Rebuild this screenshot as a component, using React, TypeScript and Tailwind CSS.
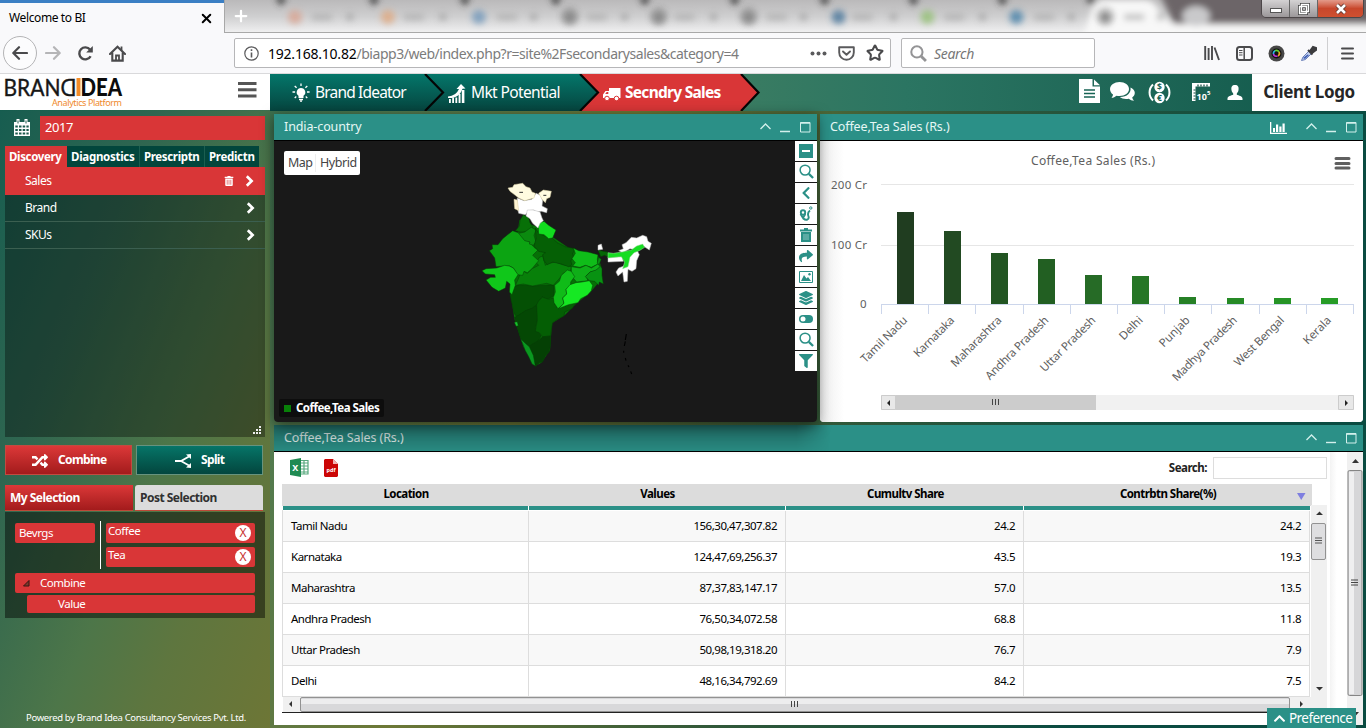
import React from "react";
import {
  FaFilter, FaRandom, FaChevronUp, FaChevronLeft,
  FaShare, FaTrashAlt, FaLayerGroup,
} from "react-icons/fa";
import { ArrowLeft, ArrowRight, Star, X, Plus } from "lucide-react";

const tabBlobs = [
  { x: 70, c: "#d9a08c", t: 95 }, { x: 163, c: "#e0a57a", t: 187 }, { x: 254, c: "#6b93b8", t: 280 },
  { x: 345, c: "#777777", t: 370 }, { x: 434, c: "#777777", t: 458 }, { x: 524, c: "#777777", t: 550 },
  { x: 614, c: "#3f6f95", t: 636 }, { x: 703, c: "#8fbf6d", t: 728 }, { x: 792, c: "#3d7ba5", t: 818 },
  { x: 881, c: "#6d6d6d", t: 908 },
];

function Magnifier({ size, className = "", sw = 1.6 }: { size: number; className?: string; sw?: number }) {
  return (
    <svg className={className} width={size} height={size} viewBox="0 0 16 16" fill="none" stroke="currentColor">
      <circle cx="6.500" cy="6.500" r="5.300" strokeWidth={sw} />
      <path d="M10.500 10.500L15 15" strokeWidth={sw + 0.8} />
    </svg>
  );
}

function BoldChevron({ className = "" }: { className?: string }) {
  return <svg className={className} width="9" height="12" viewBox="0 0 9 12" fill="none"><path d="M1.800 1.300L6.600 6L1.800 10.700" stroke="#fff" strokeWidth="2.700" /></svg>;
}

function BrowserTabs() {
  return (
    <div className="flex h-[33px] shrink-0">
      <div className="flex w-[224px] items-center justify-between border-t-[3px] border-[#3b7fc4] bg-[#f9f9fb] pr-[10px] pl-[9px]">
        <span className="text-[12px] tracking-[-0.38px] text-black">Welcome to BI</span>
        <X size={15} strokeWidth={3.2} className="text-black" />
      </div>
      <div className="relative flex-1 overflow-hidden border-b border-l border-[#a8a8a8] bg-[#cfcfcf]">
        <svg className="block h-[33px] w-full" viewBox="0 0 1142 33">
          <defs>
            <filter id="soft" x="-20%" y="-50%" width="140%" height="200%"><feGaussianBlur stdDeviation="3.2" /></filter>
            <linearGradient id="tabbg" x2="0" y2="1">
              <stop offset="0" stopColor="#bab9ba" /><stop offset=".5" stopColor="#cfcfd0" /><stop offset="1" stopColor="#f1f1f2" />
            </linearGradient>
          </defs>
          <rect width="1142" height="33" fill="url(#tabbg)" />
          <g filter="url(#soft)">
            <path d="M935 -8H1160V24H950Z" fill="#6c6567" />
            <path d="M858 40L868 8Q872 0 882 0H922Q932 2 934 10L946 24H1150V42Z" fill="#f8f8f8" />
            <ellipse cx="972" cy="16" rx="14" ry="10" fill="#c9c9cb" />
            {tabBlobs.map((b) => (
              <g key={b.x}>
                <circle cx={b.x} cy="17" r="7" fill={b.c} opacity=".75" />
                <rect x={b.t - 8} y="14" width="20" height="6" fill="#aaa" opacity=".7" />
                <circle cx={b.x + 55} cy="17" r="3.500" fill="#8a8a8a" opacity=".6" />
                <path d={`M${b.x - 20} -3h12l-6 9z`} fill="#3c3c3c" />
              </g>
            ))}
          </g>
          <g fill="none" stroke="#707070" strokeWidth="3" opacity=".35" filter="url(#soft)"><circle cx="881" cy="16" r="7" /><circle cx="345" cy="16" r="7" /><circle cx="434" cy="16" r="7" /><circle cx="524" cy="16" r="7" /></g>
        </svg>
        <Plus size={18} strokeWidth={3} className="absolute top-[7px] left-[7px] text-white" />
        <div className="absolute top-[-1px] right-[2px] flex h-[19px] w-[103px] overflow-hidden rounded-b-[5px] border border-[#4c4648] text-white">
          <div className="flex w-[28px] items-center justify-center border-r border-[#666] bg-linear-to-b from-[#d4d2d3] to-[#9b9799]">
            <i className="mt-1 h-[5px] w-[12px] border border-[#555] bg-white" />
          </div>
          <div className="flex w-[28px] items-center justify-center border-r border-[#666] bg-linear-to-b from-[#d4d2d3] to-[#9b9799]">
            <svg width="14" height="14" viewBox="0 0 14 14" fill="none"><path d="M4.500 2.500h7v7h-7zM2.500 4.500h7v7h-7z" stroke="#444" strokeWidth="3" /><path d="M4.500 2.500h7v7h-7zM2.500 4.500h7v7h-7z" stroke="#fff" strokeWidth="1.400" /></svg>
          </div>
          <div className="flex flex-1 items-center justify-center bg-linear-to-b from-[#e39a8a] via-[#c8472c] to-[#cf5030]">
            <svg width="14" height="12" viewBox="0 0 14 12"><path d="M3 2l8 8M11 2l-8 8" stroke="#5d3630" strokeWidth="4.400" /><path d="M3 2l8 8M11 2l-8 8" stroke="#fff" strokeWidth="2.600" /></svg>
          </div>
        </div>
      </div>
    </div>
  );
}

function BrowserToolbar() {
  return (
    <div className="flex h-[41px] shrink-0 items-center border-b border-[#d9d9db] bg-[#f9f9fb] text-[#4a4a4c]">
      <div className="flex w-[234px] items-center pl-[3px]">
        <div className="flex size-[34px] items-center justify-center rounded-full border border-[#b4b4b6] bg-[#fcfcfd]">
          <svg width="16" height="14" viewBox="0 0 16 14" fill="none" stroke="#4a4a4c" strokeWidth="2.200" strokeLinecap="round" strokeLinejoin="round"><path d="M15 7H1.500M7 1.200L1.300 7L7 12.800" /></svg>
        </div>
        <svg className="ml-[8px]" width="16" height="14" viewBox="0 0 16 14" fill="none" stroke="#b5b5b7" strokeWidth="2.200" strokeLinecap="round" strokeLinejoin="round"><path d="M1 7h13.500M9 1.200L14.700 7L9 12.800" /></svg>
        <svg className="ml-[16px]" width="17" height="17" viewBox="0 0 17 17" fill="none"><path d="M13.600 11.200A6 6 0 1 1 13 4.600" stroke="#4a4a4c" strokeWidth="2.400" /><path d="M15.800 1v6.600H9.200z" fill="#4a4a4c" /></svg>
        <svg className="ml-[15px]" width="17" height="17" viewBox="0 0 17 17"><path d="M1 9L8.500 1.800L16 9M3.300 8v7.600h10.400V8" fill="none" stroke="#4a4a4c" strokeWidth="2.100" strokeLinecap="round" /><path d="M7 15.500v-5h3v5M12.500 1.500v4" stroke="#4a4a4c" strokeWidth="1.800" fill="none" /></svg>
      </div>
      <div className="flex h-[30px] w-[657px] items-center rounded-[2px] border border-[#b6b6b8] bg-white pr-[7px] pl-[9px]">
        <svg width="15" height="15" viewBox="0 0 15 15" fill="none" stroke="#5a5a5c"><circle cx="7.500" cy="7.500" r="6.700" strokeWidth="1.200" /><path d="M7.500 6.500v5M7.500 3.300v1.700" strokeWidth="1.600" /></svg>
        <span className="ml-[9px] text-[14px] tracking-[-0.47px] text-[#7c7c7c]"><span className="tracking-[-0.22px] text-black">192.168.10.82</span>/biapp3/web/index.php?r=site%2Fsecondarysales&amp;category=4</span>
        <div className="ml-auto flex items-center gap-[11px]">
          <svg width="17" height="5" viewBox="0 0 17 5" fill="#5a5a5c"><circle cx="2.500" cy="2.500" r="2" /><circle cx="8.500" cy="2.500" r="2" /><circle cx="14.500" cy="2.500" r="2" /></svg>
          <svg width="17" height="15" viewBox="0 0 17 15" fill="none" stroke="#5a5a5c" strokeWidth="1.900" strokeLinecap="round" strokeLinejoin="round"><path d="M1.200 1.200h14.600v5.300a7.300 7.300 0 0 1-14.600 0z" /><path d="M5 5.500l3.500 3.300L12 5.500" /></svg>
          <Star size={18} strokeWidth={2.7} className="-mr-px" />
        </div>
      </div>
      <div className="ml-[10px] flex h-[30px] w-[194px] items-center rounded-[2px] border border-[#b6b6b8] bg-white pl-[8px]">
        <Magnifier size={17} sw={1.9} className="text-[#949496]" />
        <span className="ml-[7px] text-[14px] tracking-[-0.3px] text-[#777] italic">Search</span>
      </div>
      <div className="ml-auto flex items-center">
        <svg width="16" height="16" viewBox="0 0 16 16" stroke="#4a4a4c" strokeWidth="1.900" fill="none"><path d="M1.200 1v14M4.600 3v12M8 1v14M10.500 2.500L15 15" /></svg>
        <svg className="ml-[16px]" width="17" height="15" viewBox="0 0 17 15" fill="none" stroke="#4a4a4c"><rect x="1" y="1" width="15" height="13" rx="2.500" strokeWidth="2" /><path d="M8.200 1v13" strokeWidth="1.500" /><path d="M3 4.500h3.500M3 6.700h3.500M3 9h3.500" /></svg>
        <svg className="ml-[15px]" width="17" height="17" viewBox="0 0 17 17"><circle cx="8.500" cy="8.500" r="8" fill="#474747" /><circle cx="8.500" cy="8.500" r="5" fill="#111" /><g fill="none" strokeWidth="1.700"><path d="M5.400 9A3.200 3.200 0 0 1 7 5.800" stroke="#29b6e8" /><path d="M7 5.700A3.200 3.200 0 0 1 11 7" stroke="#63d531" /><path d="M11 7A3 3 0 0 1 10 11" stroke="#f0a42a" /><path d="M9.500 11A3 3 0 0 1 5.400 9" stroke="#bb35d6" /></g></svg>
        <svg className="ml-[15px]" width="17" height="17" viewBox="0 0 17 17"><path d="M1.500 15.500L3 12L9 6l2.500 2.500-6 6z" fill="#c4d1ef" stroke="#6a7fb8" /><path d="M3 13l4.500-3.500 1.500.5-4 4z" fill="#3f5fb5" /><path d="M8 5l4.500 4.500M10 6l3-4 3 1 0 2-4 3z" stroke="#3c3c3e" strokeWidth="2" fill="#3c3c3e" /></svg>
        <i className="ml-[10px] h-[33px] w-px bg-[#cfcfd1]" />
        <svg className="mr-[12px] ml-[13px]" width="13" height="13" viewBox="0 0 13 13" stroke="#4a4a4c" strokeWidth="2" strokeLinecap="round"><path d="M1 1.500h11M1 6.500h11M1 11.500h11" /></svg>
      </div>
    </div>
  );
}

function Logo() {
  return (
    <div className="flex h-[36px] w-[270px] items-start bg-white">
      <svg width="130" height="36" viewBox="0 0 130 36" className="overflow-visible font-['Lato',sans-serif]">
        <text x="3.500" y="21.500" fontSize="24" fill="#171717" stroke="#171717" strokeWidth=".4" textLength="57" lengthAdjust="spacingAndGlyphs">BRAN</text>
        <text transform="translate(76.500 21.500) scale(-1 1)" x="0" y="0" fontSize="24" fill="#171717" stroke="#171717" strokeWidth=".4" textLength="16" lengthAdjust="spacingAndGlyphs">D</text>
        <rect x="76.500" y="4" width="4" height="18" fill="#f28c28" />
        <text x="80.500" y="21.500" fontSize="24" fontWeight="900" fill="#0b0b0b" textLength="41.500" lengthAdjust="spacingAndGlyphs">DEA</text>
        <text x="52" y="32" fontSize="9" fill="#ef8a2c" textLength="70" className="font-['Noto_Sans',sans-serif]">Analytics Platform</text>
      </svg>
      <svg className="mt-[8px] ml-[108px]" width="19" height="16" viewBox="0 0 19 16" fill="#555"><path d="M0 0h18.500v3H0zM0 6.300h18.500v3H0zM0 12.600h18.500v3H0z" /></svg>
    </div>
  );
}

function BulbIcon() {
  return (
    <svg width="18" height="19" viewBox="0 0 18 19" fill="#fff" stroke="#fff"><path d="M9 5a4.300 4.300 0 0 0-2.500 7.800v2.200h5v-2.200A4.300 4.300 0 0 0 9 5z" stroke="none" /><path d="M7 16.500h4M8 18.200h2M9 .5v2.500M2.700 3l1.900 1.800M15.300 3l-1.900 1.800M.5 9h2.600M15 9h2.600M2.700 15l1.600-1.500M15.300 15l-1.600-1.500" strokeWidth="1.300" /></svg>
  );
}

function TopBar() {
  return (
    <div className="flex h-[37px] shrink-0">
      <Logo />
      <div className="flex flex-1 bg-linear-to-r from-[#5d8f60] from-0% via-[#2b7562] via-[58%] to-[#0f574a]">
        <div className="relative flex w-[490px] text-[15.5px] text-white">
          <svg className="absolute inset-0" width="490" height="37" viewBox="0 0 490 37">
            <defs><linearGradient id="nav" x2="0" y2="1"><stop stopColor="#04766a" /><stop offset="1" stopColor="#06453f" /></linearGradient></defs>
            <path d="M0 0H310L328 18.500L310 37H0z" fill="url(#nav)" />
            <path d="M310 0H471L489 18.500L471 37H310L328 18.500z" fill="#d93637" />
            <path d="M155 0l18 18.500L155 37M310 0l18 18.500L310 37M471 0l17.500 18.500L471 37" fill="none" stroke="#050505" strokeWidth="2.200" />
          </svg>
          <div className="relative flex w-[155px] items-center pl-[22px]"><BulbIcon /><span className="ml-[5px] tracking-[-0.82px]">Brand Ideator</span></div>
          <div className="relative flex w-[155px] items-center pl-[23px]">
            <svg className="mt-[2px]" width="18" height="19" viewBox="0 0 18 19" fill="#fff"><path d="M1 15h1.800v4H1zM4.200 13.500H6V19H4.200zM7.400 13.500h1.800V19H7.400zM10.600 10h1.900v9h-1.900zM13.800 6h2.600v13h-2.600z" /><path d="M0 12.500Q8 12 11 5L8.500 5L13 0l4.500 4.500-3 .2C12 11.500 7.500 14.500 0 14z" /></svg>
            <span className="ml-[5px] tracking-[-0.62px]">Mkt Potential</span>
          </div>
          <div className="relative flex flex-1 items-center pl-[23px]">
            <svg className="mt-[3px]" width="18" height="13" viewBox="0 0 18 13"><path d="M6 0h11.500v10H0V6.500L2.500 3H6z" fill="#fff" /><path d="M2.200 6l1.500-2h1.600v2z" fill="#d93637" /><circle cx="4" cy="10.500" r="2.300" fill="#fff" stroke="#d93637" /><circle cx="13.500" cy="10.500" r="2.300" fill="#fff" stroke="#d93637" /></svg>
            <span className="ml-[4px] font-bold tracking-[-0.72px]">Secndry Sales</span></div>
        </div>
        <div className="ml-auto flex items-center text-white">
          <svg className="-mt-[3px]" width="21" height="24" viewBox="0 0 21 24"><path d="M0 0h13.500v7.500H21V24H0z" fill="#fff" /><path d="M15 .5L21 6.200h-6z" fill="#fff" /><path d="M5 11h11M5 14.500h11M5 18h11" stroke="#176354" strokeWidth="1.500" /></svg>
          <svg className="-mt-[2px] ml-[10px]" width="25" height="20" viewBox="0 0 25 20" fill="#fff"><path d="M9.500 0C15 0 19 3 19 7s-4 7-9.500 7c-1 0-2-.1-3-.3C5 15 3.500 15.700 1.500 15.800c.8-1 1.400-2 1.500-3.300C1 11.200 0 9.200 0 7c0-4 4.500-7 9.500-7z" /><path d="M20.500 5.500c2.500 1 4.300 3 4.300 5.300 0 2-1 3.500-2.600 4.600.2 1.200.9 2.300 1.800 3.300-2 0-3.800-.8-5.200-2-3.600.7-7 0-9-1.700 7 .2 11.600-4 10.700-9.500z" /></svg>
          <svg className="ml-[13px] font-['Noto_Sans',sans-serif]" width="23" height="23" viewBox="0 0 23 23"><path d="M5 3.500A11 11 0 0 0 5 19.500M18 3.500a11 11 0 0 1 0 16" fill="none" stroke="#fff" strokeWidth="2" /><circle cx="11.500" cy="6" r="5.200" fill="#fff" /><circle cx="11.500" cy="17" r="5.200" fill="#fff" /><text x="11.500" y="9" fontSize="8.500" fontWeight="700" textAnchor="middle" fill="#176354">$</text><text x="11.500" y="20" fontSize="8.500" fontWeight="700" textAnchor="middle" fill="#176354">€</text></svg>
          <svg className="ml-[21px] font-['Noto_Sans',sans-serif]" width="19" height="19" viewBox="0 0 19 19"><path d="M0 0h18v3.500H3.500V18H0z" fill="#fff" /><path d="M6 1.500v2M9 1.500v2M12 1.500v2M15 1.500v2M1.500 7h2M1.500 10h2M1.500 13h2M1.500 16h2" stroke="#124c42" strokeWidth="1.200" /><text x="4.500" y="16.500" fontSize="9" fontWeight="700" fill="#fff">10</text><text x="15" y="12" fontSize="6" fontWeight="700" fill="#fff">5</text></svg>
          <svg className="-mt-[1px] mr-[9px] ml-[16px]" width="16" height="15" viewBox="0 0 16 15" fill="#fff"><path d="M8 0c3 0 4 2 3.500 5-.2 1.700-1 2.700-1.700 3.500v1.300c2 .8 5.700 1.300 5.700 3.700V15H.5v-1.500c0-2.400 3.700-2.900 5.700-3.700V8.500C5.500 7.700 4.700 6.700 4.500 5 4 2 5 0 8 0z" /></svg>
          <div className="h-[37px] w-[114px] bg-white pt-[5px] text-center text-[17px] font-bold tracking-[-0.35px] whitespace-nowrap text-[#262626]">Client Logo</div>
        </div>
      </div>
    </div>
  );
}

function Sidebar() {
  return (
    <aside className="flex w-[270px] shrink-0 flex-col bg-[linear-gradient(113deg,#175d50_0%,#2f6650_30%,#4d7649_58%,#5e763f_75%,#6d7636_100%)] pl-[5px] text-white">
      <div className="mt-[5px] flex h-[24px] w-[260px]">
        <div className="flex w-[35px] items-center pl-[9px]">
          <svg className="-mt-px" width="16" height="17" viewBox="0 0 16 17"><path d="M0 3h16v14H0z" fill="#fff" /><path d="M1.300 6.500h2.500v2H1.300zM5 6.500h2.500v2H5zM8.700 6.500h2.500v2H8.700zM12.400 6.500h2.300v2h-2.300zM1.300 10h2.500v2H1.300zM5 10h2.500v2H5zM8.700 10h2.500v2H8.700zM12.400 10h2.300v2h-2.300zM1.300 13.500h2.500v2H1.300zM5 13.500h2.500v2H5zM8.700 13.500h2.500v2H8.700zM12.400 13.500h2.300v2h-2.300z" fill="#1c5a4d" /><path d="M4 0v5M12 0v5" stroke="#fff" strokeWidth="3" /><path d="M4 1.500v3M12 1.500v3" stroke="#1c5a4d" /></svg>
        </div>
        <div className="flex flex-1 items-center bg-[#d93637] pl-[5px] text-[13px] tracking-[-0.4px]">2017</div>
      </div>
      <div className="mt-[6px] flex h-[21px] items-stretch text-[11.5px] font-bold whitespace-nowrap">
        <div className="flex w-[62px] items-center pl-[4px] bg-[#d93637] tracking-[-0.35px]">Discovery</div>
        <div className="flex w-[73px] items-center border-r border-[#1b5e50] bg-[#02463c] pl-[4px] tracking-[-0.28px]">Diagnostics</div>
        <div className="flex w-[65px] items-center border-r border-[#1b5e50] bg-[#02463c] pl-[4px] tracking-[-0.35px]">Prescriptn</div>
        <div className="flex w-[54px] items-center bg-[#02463c] pl-[4px] tracking-[-0.3px]">Predictn</div>
      </div>
      <div className="relative flex h-[270px] w-[260px] flex-col bg-black/35 text-[12px] tracking-[-0.5px]">
        <div className="flex h-[28px] items-center bg-[#d93637] pl-[20px]">Sales<FaTrashAlt size={10} className="ml-auto" /><BoldChevron className="mr-[11px] ml-[11px]" /></div>
        <div className="flex h-[27px] items-center border-b border-[#3b5f50] pl-[20px]">Brand<BoldChevron className="mr-[10px] ml-auto" /></div>
        <div className="flex h-[27px] items-center border-b border-[#3b5f50] pl-[20px]">SKUs<BoldChevron className="mr-[10px] ml-auto" /></div>
        <svg className="absolute right-[3px] bottom-[2px]" width="9" height="9" viewBox="0 0 9 9" fill="#eee"><path d="M6 0h2v2H6zM6 3h2v2H6zM3 3h2v2H3zM0 6h2v2H0zM3 6h2v2H3zM6 6h2v2H6z" /></svg>
      </div>
      <div className="mt-[8px] flex gap-[4px] text-[12px] font-bold tracking-[-0.65px]">
        <div className="flex h-[30px] w-[127px] items-center border border-[#c24b40] bg-linear-to-b from-[#dc3838] to-[#a31b1c] pl-[26px]"><FaRandom size={16} className="mt-[2px]" /><span className="ml-[10px]">Combine</span></div>
        <div className="flex h-[30px] w-[127px] items-center border border-[#67937e] bg-linear-to-b from-[#067568] to-[#03463e] pl-[38px]">
          <svg className="mt-[2px]" width="17" height="14" viewBox="0 0 17 14"><path d="M0 7h6L14 2.500M6 7l8 4.500" stroke="#fff" strokeWidth="1.800" fill="none" /><path d="M11 .5L16 0v5zM11 13.500l5 .5V9z" fill="#fff" /></svg>
          <span className="ml-[9px]">Split</span>
        </div>
      </div>
      <div className="mt-[10px] flex h-[26px] gap-[2px] text-[12px] font-bold tracking-[-0.52px]">
        <div className="flex w-[128px] items-center border-b border-[#bd4a38] bg-linear-to-b from-[#dc3838] to-[#a31b1c] pl-[5px]">My Selection</div>
        <div className="flex w-[128px] items-center rounded-t-[3px] border-b border-[#bd4a38] bg-[#dcdcdc] pl-[5px] text-[#303030]">Post Selection</div>
      </div>
      <div className="mt-px h-[106px] w-[260px] bg-black/45 pt-[9px] pr-[10px] pl-[10px] text-[11.5px] tracking-[-0.46px]">
        <div className="flex">
          <div className="mt-[2px] flex h-[20px] w-[80px] items-center rounded-[2px] bg-[#d93637] pl-[4px]">Bevrgs</div>
          <div className="ml-[5px] h-[48px] w-px bg-white" />
          <div className="mt-[2px] ml-[5px] flex flex-1 flex-col gap-[4px]">
            {["Coffee", "Tea"].map((t) => (
              <div key={t} className="flex h-[20px] justify-between rounded-[2px] bg-[#d93637] pr-[4px] pl-[2px] leading-[16px]">{t}
                <span className="mt-[2px] flex size-[16px] items-center justify-center rounded-full bg-white text-[12px] tracking-normal text-[#c8302f]">X</span></div>
            ))}
          </div>
        </div>
        <div className="mt-[4px] flex h-[20px] items-center rounded-[2px] bg-[#d93637] pl-[8px]">
          <svg className="mt-px" width="7" height="7" viewBox="0 0 7 7"><path d="M6 .5V6H.5z" fill="#7b3a2c" stroke="#3a1512" /></svg>
          <span className="ml-[10px]">Combine</span></div>
        <div className="mt-[2px] ml-[12px] flex h-[18px] items-center rounded-[2px] bg-[#d93637] pl-[31px] leading-[16px]">Value</div>
      </div>
      <div className="mt-auto mb-[3px] pl-[21px] text-[9.5px] tracking-[-0.34px] whitespace-nowrap">Powered by Brand Idea Consultancy Services Pvt. Ltd.</div>
    </aside>
  );
}

function WindowButtons() {
  return (
    <svg width="51" height="12" viewBox="0 0 51 12" fill="none" stroke="#d3f0ec"><path d="M0.500 8L5.500 3L10.500 8" strokeWidth="1.300" /><path d="M20 10.500h10" strokeWidth="1.400" /><path d="M40.500 1.500h9.500v9.500h-9.500z" /><path d="M40.500 2h9.500" strokeWidth="1.600" /></svg>
  );
}

function PanelHeader({ title, chart }: { title: string; chart?: boolean }) {
  return (
    <div className="flex h-[27px] shrink-0 items-center border-b border-black bg-[#2b9087] pr-[6px] pl-[10px] text-[12.5px] tracking-[-0.11px] text-[#e6f7f5]">
      {title}
      <div className="ml-auto flex items-center">
        {chart && <svg className="mt-[2px] mr-[19px]" width="17" height="12" viewBox="0 0 17 12" fill="#fff"><path d="M0 0h1.300v10.700H17V12H0zM3 6h2v4H3zM6 2.500h2.200V10H6zM9.300 4.500h2.200V10H9.300zM12.500 1.500h2.200V10h-2.200z" /></svg>}
        <WindowButtons />
      </div>
    </div>
  );
}

function IndiaMap() {
  return (
    <svg className="absolute top-[29px] left-[196px]" width="200" height="210" viewBox="0 0 600 630" strokeWidth="1.500" strokeLinejoin="round">
      <path d="M148 150L200 170L256 206L300 236L384 256L396 300L384 340L360 368L320 400L285 435L246 460L240 540L214 578L196 588L160 530L134 450L122 376L134 340L130 290Z" fill="#067006" />
      <g stroke="#073d07">
        <path d="M120 375L128 352L148 344L188 348L252 344L252 378L232 388L216 380L204 400L188 414L166 424L140 440L132 430L126 402Z" fill="#045004" />
        <path d="M134 442L148 434L166 422L188 414L200 404L204 430L202 452L196 474L206 486L214 498L202 516L186 524L176 530L152 506L142 474Z" fill="#044804" />
        <path d="M200 404L206 392L218 382L236 388L250 384L254 402L264 416L296 404L320 396L306 416L284 426L282 438L262 448L248 458L244 480L242 498L218 500L208 488L196 484L202 452Z" fill="#045e04" />
        <path d="M178 528L204 512L218 500L242 498L242 520L238 546L226 558L218 576L208 578L196 590L188 558Z" fill="#044004" />
        <path d="M152 506L166 520L178 530L190 556L196 588L186 582L176 560L166 542Z" fill="#0a9720" />
        <path d="M133 457l9-2 3 12-7 2z" fill="#17c42c" />
        <path d="M146 324L150 312L162 304L172 310L186 296L206 286L198 278L208 262L218 258L226 286L236 280L256 276L278 284L304 290L302 304L280 310L268 326L250 346L230 340L188 348L160 342L136 346Z" fill="#08800a" />
        <path d="M128 182L150 190L166 208L180 216L192 232L204 240L188 256L206 272L186 296L172 308L162 304L158 316L142 314L130 294L118 288L102 288L78 290L74 264L58 242L68 236L66 224L84 224L98 206Z" fill="#0ca412" />
        <path d="M36 302L48 296L80 294L104 286L118 288L130 294L144 314L134 330L136 346L126 374L118 366L120 342L110 334L106 354L86 364L66 352L48 330L62 322L76 322L74 314L46 312Z" fill="#10c71a" />
        <path d="M160 134L176 142L180 158L188 170L180 182L164 186L150 186L136 182L148 168L150 150Z" fill="#077007" />
        <path d="M146 190L164 186L184 172L198 180L192 196L198 216L190 226L178 222L180 216L164 212Z" fill="#0b8a0f" />
        <path d="M196 174L206 190L224 198L248 206L262 218L286 230L316 236L308 250L312 264L302 272L306 284L296 290L274 282L248 276L232 284L222 272L218 254L226 248L206 244L192 228L198 206Z" fill="#056005" />
        <path d="M204 160L222 154L236 166L258 180L248 204L236 206L222 194L206 192Z" fill="#12dc1f" />
        <path d="M310 234L326 242L354 246L384 254L382 268L384 282L364 292L346 286L330 292L308 288L316 278L306 266L316 250Z" fill="#0fbd19" />
        <path d="M304 290L330 294L348 286L364 294L384 282L394 290L378 302L360 306L348 318L354 332L320 336L304 318Z" fill="#0fae18" />
        <path d="M386 262L394 268L388 282L396 296L396 316L400 342L388 336L386 346L374 334L358 332L346 320L360 306L378 300L390 290L382 278Z" fill="#089212" />
        <path d="M274 316L292 300L304 304L314 320L302 336L302 350L288 358L290 372L278 384L282 400L264 416L252 398L250 382L256 366L254 346L268 334Z" fill="#10bb18" />
        <path d="M300 344L318 338L336 336L358 332L368 346L364 362L352 376L332 386L324 398L296 404L280 410L266 416L282 400L278 384L290 372L288 358Z" fill="#16e823" />
        <path d="M384 240L400 244L414 246L414 262L404 256L392 260Z" fill="#056605" />
      </g>
      <g fill="#fff" stroke="#bbb">
        <path d="M142 84L162 92L186 88L198 70L212 76L218 92L216 108L232 116L230 128L214 124L202 126L190 120L176 122L166 134L146 130L140 104Z" />
        <path d="M172 120L190 120L210 126L216 144L220 152L210 160L204 174L188 160L180 146L168 138Z" />
        <path d="M384 226L394 222L398 238L384 240Z" />
        <path d="M456 224L468 218L484 202L500 204L518 196L530 200L534 214L544 220L538 240L520 228L502 240L480 236L458 248L446 242L460 236Z" />
        <path d="M414 262L456 260L460 274L414 276Z" />
        <path d="M476 254L502 242L508 254L500 272L498 296L486 304L474 298L472 334L462 336L458 306L444 318L438 306L446 294L462 288Z" />
      </g>
      <path d="M414 248L430 250L456 246L484 240L500 228L518 222L524 232L508 242L492 248L480 262L474 290L458 296L464 276L454 260L414 264Z" fill="#16dd22" stroke="#9fd89f" />
      <path d="M114 54L128 52L132 44L158 40L168 50L180 54L186 66L196 70L192 84L178 88L164 92L146 84L136 76L120 64Z" fill="#fffbe0" stroke="#d8cfa0" />
      <path d="M206 70L220 60L244 64L240 82L230 86L226 98L216 88Z" fill="#fffbe0" stroke="#d8cfa0" />
      <path d="M132 88L142 90L146 122L134 116Z" fill="#fff3d2" stroke="#d8cfa0" />
      <path d="M148 67h11M220 76h9" stroke="#333" strokeWidth="3" />
      <path d="M469 492l-3 18M466 514l-3 14M461 542v6M466 564l2 8M474 586l3 5M482 604l3 8" stroke="#000" strokeWidth="3.500" />
    </svg>
  );
}

const tools = [
  <svg width="14" height="14" viewBox="0 0 14 14"><path d="M0 0h14v14H0z" fill="#2b9087" /><path d="M3 7h8" stroke="#fff" strokeWidth="2" /></svg>,
  <Magnifier size={15} />,
  <FaChevronLeft size={14} />,
  <svg width="14" height="15" viewBox="0 0 14 15" fill="none" stroke="#2b9087" strokeWidth="1.900"><circle cx="4" cy="6.500" r="2.200" /><path d="M1.500 8L4 12l2.300-4M4.500 12.500c2.500 2.500 6 1 5-2-1-2.500-.5-4.500 1.500-6" /><circle cx="11.800" cy="2" r="1.200" strokeWidth="1" /></svg>,
  <svg width="12" height="14" viewBox="0 0 12 14"><path d="M0 2.500h12M4 1h4" stroke="#2b9087" strokeWidth="1.800" /><path d="M1 4h10v10H1z" fill="#2b9087" /><path d="M4 6v6M6 6v6M8 6v6" stroke="#8cc6c1" /></svg>,
  <FaShare size={14} />,
  <svg width="14" height="12" viewBox="0 0 14 12"><path d="M.5.5h13v11H.5z" fill="none" stroke="#2b9087" /><path d="M2 10l3-6 2.500 3.500L9 6l3 4z" fill="#2b9087" /><circle cx="10.500" cy="3.200" r="1.200" fill="#2b9087" /></svg>,
  <FaLayerGroup size={14} />,
  <svg width="14" height="8" viewBox="0 0 14 8"><rect width="14" height="8" rx="4" fill="#2b9087" /><circle cx="4" cy="4" r="2.500" fill="#fff" /></svg>,
  <Magnifier size={15} />,
  <FaFilter size={14} />,
];

function MapPanel() {
  return (
    <section className="relative z-10 flex h-[308px] w-[543px] flex-col overflow-hidden rounded-b-[4px] shadow-[0_3px_14px_rgba(0,0,0,0.55)]">
      <PanelHeader title="India-country" />
      <div className="relative flex-1 bg-[#191919]">
        <IndiaMap />
        <div className="absolute top-[10px] left-[10px] flex h-[24px] w-[76px] items-center rounded-[2px] bg-white text-[12.5px] tracking-[-0.5px] text-[#444]"><span className="w-[32px] border-r border-[#eee] pl-[4px]">Map</span><span className="pl-[4px] tracking-[-0.42px]">Hybrid</span></div>
        <div className="absolute top-0 right-0 flex flex-col gap-px text-[#2b9087]">
          {tools.map((t, i) => <div key={i} className="flex h-[20px] w-[22px] items-center justify-center bg-white pb-px">{t}</div>)}
        </div>
        <div className="absolute bottom-[5px] left-[5px] flex h-[18px] items-center rounded-[2px] bg-[#0d0d0d] px-[5px] text-[11.5px] font-bold tracking-[-0.52px] text-white"><i className="mr-[5px] size-[7px] bg-[#088008]" />Coffee,Tea Sales</div>
      </div>
    </section>
  );
}

const bars = [
  { n: "Tamil Nadu", y: 212, c: "#203d20", w: 60 }, { n: "Karnataka", y: 231, c: "#224a22", w: 52 },
  { n: "Maharashtra", y: 253, c: "#225522", w: 66 }, { n: "Andhra Pradesh", y: 259, c: "#225f22", w: 84 },
  { n: "Uttar Pradesh", y: 275, c: "#266b26", w: 73 }, { n: "Delhi", y: 276, c: "#267626", w: 28 },
  { n: "Punjab", y: 297, c: "#268026", w: 38 }, { n: "Madhya Pradesh", y: 298, c: "#268a26", w: 86 },
  { n: "West Bengal", y: 298, c: "#269426", w: 65 }, { n: "Kerala", y: 298, c: "#269c26", w: 34 },
];

function ChartPanel() {
  return (
    <section className="flex h-[308px] w-[543px] flex-col overflow-hidden rounded-b-[4px] bg-white">
      <PanelHeader title="Coffee,Tea Sales (Rs.)" chart />
      <svg className="bg-[linear-gradient(to_right,#ededed,#fff_24px)] font-['Noto_Sans',sans-serif]" width="543" height="281" viewBox="820 141 543 281" fill="#606060" fontSize="11.500">
        <text x="1031" y="165" textLength="124" fontSize="12">Coffee,Tea Sales (Rs.)</text>
        <path d="M1336 158.500h13M1336 163.500h13M1336 168h13" stroke="#606060" strokeWidth="3" strokeLinecap="round" />
        <path d="M881 184.500h473M881 245.500h473" stroke="#e6e6e6" />
        <text x="831" y="189" textLength="36">200 Cr</text><text x="831" y="249" textLength="36">100 Cr</text><text x="860" y="308">0</text>
        {bars.map((b, i) => (
          <g key={b.n}>
            <rect x={897 + Math.floor(i * 47.15)} y={b.y} width="17" height={304 - b.y} fill={b.c} />
            <text transform={`translate(${908 + i * 47.1} 321) rotate(-45)`} textAnchor="end" textLength={b.w}>{b.n}</text>
          </g>
        ))}
        <path d="M881 304.500h473M881.500 304v10M928.500 304v10M975.500 304v10M1023.500 304v10M1070.500 304v10M1117.500 304v10M1164.500 304v10M1211.500 304v10M1259.500 304v10M1306.500 304v10M1353.500 304v10" stroke="#ccd6eb" fill="none" />
        <path d="M881 395h473v15H881z" fill="#f1f1f1" /><path d="M895 395h201v15H895z" fill="#ccc" />
        <path d="M881.500 395.500h14v14h-14zM1338.500 395.500h15v14h-15z" fill="#e8e8e8" stroke="#ccc" />
        <path d="M890 400v6l-3-3zM1345 400v6l3-3z" fill="#222" /><path d="M992.500 399v6M995.500 399v6M998.500 399v6" stroke="#444" />
      </svg>
    </section>
  );
}

const rows = [
  ["Tamil Nadu", "156,30,47,307.82", "24.2", "24.2"], ["Karnataka", "124,47,69,256.37", "43.5", "19.3"],
  ["Maharashtra", "87,37,83,147.17", "57.0", "13.5"], ["Andhra Pradesh", "76,50,34,072.58", "68.8", "11.8"],
  ["Uttar Pradesh", "50,98,19,318.20", "76.7", "7.9"], ["Delhi", "48,16,34,792.69", "84.2", "7.5"],
];

function TablePanel() {
  return (
    <section className="relative flex h-[300px] w-[1089px] flex-col bg-white">
      <PanelHeader title="Coffee,Tea Sales (Rs.)" />
      <div className="flex min-h-0 flex-1">
        <div className="w-[1056px] pl-[8px]">
          <div className="flex h-[31px] items-center pl-[8px]">
            <svg width="19" height="19" viewBox="0 0 19 19" className="font-['Noto_Sans',sans-serif]"><path d="M0 2l11-2v19L0 17z" fill="#1f8a52" /><path d="M11 2.500h7v13.500h-7M11 5h7M11 8h7M11 11h7M11 14h7M14 2.500v13.500" fill="none" stroke="#58a97e" strokeWidth="1.200" /><text x="2.300" y="13" fontSize="9" fontWeight="700" fill="#fff">X</text></svg>
            <svg className="ml-[15px] font-['Noto_Sans',sans-serif]" width="14" height="18" viewBox="0 0 14 18"><path d="M1 0h8l5 5v12l-1 1H1l-1-1V1z" fill="#cb0606" /><path d="M9 0l5 5H9z" fill="#f0b2b2" /><text x="2.500" y="13" fontSize="5.500" fontWeight="700" fill="#fff">pdf</text></svg>
            <span className="ml-auto text-[11.5px] font-bold tracking-[-0.5px] text-[#222]">Search:</span>
            <div className="mr-[3px] ml-[6px] h-[22px] w-[114px] border border-[#ddd] bg-white" />
          </div>
          <div className="flex">
            <div className="w-[1030px]">
              <div className="mt-px flex h-[22px] items-center bg-[#dcdcdc] pb-[2px] text-center text-[11.5px] font-bold tracking-[-0.55px] text-black">
                <span className="w-[247px] pl-px">Location</span><span className="w-[257px]">Values</span><span className="w-[238px] pl-px">Cumultv Share</span>
                <span className="relative w-[288px]">Contrbtn Share(%)<svg className="absolute top-[8px] right-[6px]" width="9" height="7" viewBox="0 0 9 7"><path d="M0 0h8.500L4.250 7z" fill="#7f7fe0" /></svg></span>
              </div>
              <div className="flex h-[4px] w-[1028px] gap-px pl-px *:bg-[#2b9087]"><i className="w-[245px]" /><i className="w-[256px]" /><i className="w-[237px]" /><i className="flex-1" /></div>
              <div className="w-[1028px] border-l border-[#ddd] pt-px text-[11.5px] tracking-[-0.48px] text-black">
                {rows.map((r, i) => (
                  <div key={r[0]} className={`flex h-[31px] border-b border-[#ddd] *:flex *:items-center *:border-r *:border-[#ddd] *:px-[8px] ${i % 2 ? "bg-white" : "bg-[#f8f8f8]"}`}>
                    <span className="w-[246px]">{r[0]}</span><span className="w-[257px] justify-end">{r[1]}</span><span className="w-[238px] justify-end">{r[2]}</span><span className="flex-1 justify-end">{r[3]}</span>
                  </div>
                ))}
              </div>
            </div>
            <svg className="-ml-px mt-[22px]" width="16" height="192" viewBox="0 0 16 192"><path d="M0 0h16v192H0z" fill="#f0f0f0" /><path d="M5 10h7L8.500 6.500zM5 182h7l-3.500 3.500z" fill="#333" /><rect x=".5" y="18.500" width="14" height="36" rx="1.500" fill="#dedee0" stroke="#929292" /><path d="M4 33h7M4 35.500h7M4 38h7" stroke="#555" /></svg>
          </div>
          <svg width="1045" height="16" viewBox="0 0 1045 16"><path d="M1 0h1045v15H1z" fill="#f0f0f0" /><path d="M10 4v6L7 7zM1018 4v6l3-3z" fill="#333" /><rect x="18.500" y=".5" width="989" height="14" rx="1.500" fill="#d8d8da" stroke="#929292" /><path d="M19 2h988v5H19z" fill="#ededee" /><path d="M509.500 4v6M512.500 4v6M515.500 4v6" stroke="#444" /><path d="M0 15.500h1028" stroke="#222" /></svg>
        </div>
        <div className="w-[17px] bg-linear-to-r from-[#f3f3f3] to-white to-40%" />
        <svg width="16" height="273" viewBox="0 0 16 273" preserveAspectRatio="none"><path d="M0 0h16v273H0z" fill="#f0f0f0" /><path d="M5 11h7L8.500 7zM5 260h7l-3.500 4z" fill="#333" /><rect x="1" y="18.500" width="14" height="225" rx="1.500" fill="#d6d6d8" stroke="#858585" /><path d="M2 20h5v222H2z" fill="#efeff0" /><path d="M4 128h7M4 130.500h7M4 133h7" stroke="#444" /></svg>
      </div>
      <div className="absolute right-[7px] bottom-[-3px] flex h-[20px] w-[89px] items-center bg-[#2b9087] pl-[6px] text-[13.5px] tracking-[-0.55px] text-white"><FaChevronUp size={13} /><span className="ml-[3px]">Preference</span></div>
      <div className="pointer-events-none absolute top-0 left-0 h-[30px] w-[556px] bg-linear-to-b from-black/30 to-transparent [mask-image:linear-gradient(to_right,black_94%,transparent)]" />
    </section>
  );
}

export default function App() {
  return (
    <div className="flex h-[728px] w-[1366px] flex-col overflow-hidden bg-white font-['Noto_Sans','Open_Sans',sans-serif]">
      <BrowserTabs />
      <BrowserToolbar />
      <div className="flex min-h-0 flex-1 flex-col bg-[linear-gradient(112deg,#135b4e_0%,#507a50_25%,#6d7836_40%,#315839_60%,#0a4b41_82%,#0a4b41_100%)]">
        <TopBar />
        <div className="flex min-h-0 flex-1">
          <Sidebar />
          <main className="flex flex-1 flex-col pt-[3px] pl-[4px]">
            <div className="flex gap-[3px]"><MapPanel /><ChartPanel /></div>
            <div className="mt-[3px]"><TablePanel /></div>
          </main>
        </div>
      </div>
    </div>
  );
}
